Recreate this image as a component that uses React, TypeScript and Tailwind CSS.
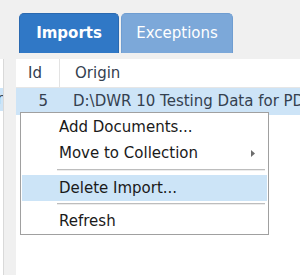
import { useState } from "react";

type MenuItem = { label: string; submenu?: boolean } | "separator";

const menuItems: MenuItem[] = [
    { label: "Add Documents..." },
    { label: "Move to Collection", submenu: true },
    "separator",
    { label: "Delete Import..." },
    "separator",
    { label: "Refresh" },
];

export default function App() {
    const [activeTab, setActiveTab] = useState("Imports");
    const [hovered, setHovered] = useState("Delete Import...");

    const tabs = [
        { name: "Imports", width: "w-[100px]" },
        { name: "Exceptions", width: "w-[112px]" },
    ];

    return (
        <div className="relative h-[275px] w-[300px] overflow-hidden bg-[#f0f0f0] font-['DejaVu_Sans',sans-serif] text-[15px]">
            {/* tab strip */}
            <div className="flex h-[59px] items-end gap-[2px] pb-[6px] pl-[19px]">
                {tabs.map((tab) => (
                    <button
                        key={tab.name}
                        onClick={() => setActiveTab(tab.name)}
                        className={
                            activeTab === tab.name
                                ? `${tab.width} h-[40px] rounded-t-[5px] border border-b-0 border-[#2a69b0] bg-[#3078c6] font-bold text-white`
                                : `${tab.width} h-[40px] rounded-t-[5px] border border-b-0 border-[#6f9dd1] bg-[#7ca8d9] text-white`
                        }
                    >
                        {tab.name}
                    </button>
                ))}
            </div>

            <div className="flex h-[216px]">
                {/* left panel, mostly off screen */}
                <div className="w-[4px] shrink-0 overflow-hidden border-r border-[#d9d9d9] bg-white pt-[29px]">
                    <div className="flex h-[23px] items-center bg-[#cde4f7] text-[#34404f]">
                        <span className="-ml-[3px]">r</span>
                    </div>
                </div>
                <div className="w-[12px] shrink-0" />

                {/* table */}
                <div className="min-w-0 flex-1 overflow-hidden bg-white text-[#34404f]">
                    <div className="flex h-[29px] items-center border-b border-[#e6e6e6]">
                        <div className="flex h-full w-[44px] shrink-0 items-center border-r border-[#e3e3e3] pl-[12px]">Id</div>
                        <div className="pl-[15px]">Origin</div>
                    </div>
                    <div className="flex h-[27px] items-center whitespace-nowrap bg-[#cde4f7]">
                        <div className="w-[44px] shrink-0 pr-[12px] text-right">5</div>
                        <div className="shrink-0 pl-[13px]">D:\DWR 10 Testing Data for PDF Import</div>
                    </div>
                </div>
            </div>

            {/* context menu */}
            <div className="absolute left-[20px] top-[112px] w-[249px] border border-[#a0a0a0] bg-white px-[1px] pt-[1px] text-[#1a1a1a]">
                {menuItems.map((item, i) =>
                    item === "separator" ? (
                        <div key={i} className={i === 2 ? "pb-[4px] pl-[35px] pr-[2px] pt-[3px]" : "pb-[3px] pl-[35px] pr-[2px] pt-[2px]"}>
                            <div className="h-[2px] border-t border-[#bdbdbd] border-b border-b-[#ececec]" />
                        </div>
                    ) : (
                        <div
                            key={item.label}
                            onMouseEnter={() => setHovered(item.label)}
                            className={`flex h-[26px] items-center justify-between pl-[37px] pr-[12px] leading-[26px] ${hovered === item.label ? "bg-[#cce4f7]" : ""}`}
                        >
                            <span>{item.label}</span>
                            {item.submenu && (
                                <svg width="4" height="7" viewBox="0 0 4 7">
                                    <path d="M0 0 L4 3.5 L0 7 Z" fill="#6d6d6d" />
                                </svg>
                            )}
                        </div>
                    )
                )}
            </div>
        </div>
    );
}
